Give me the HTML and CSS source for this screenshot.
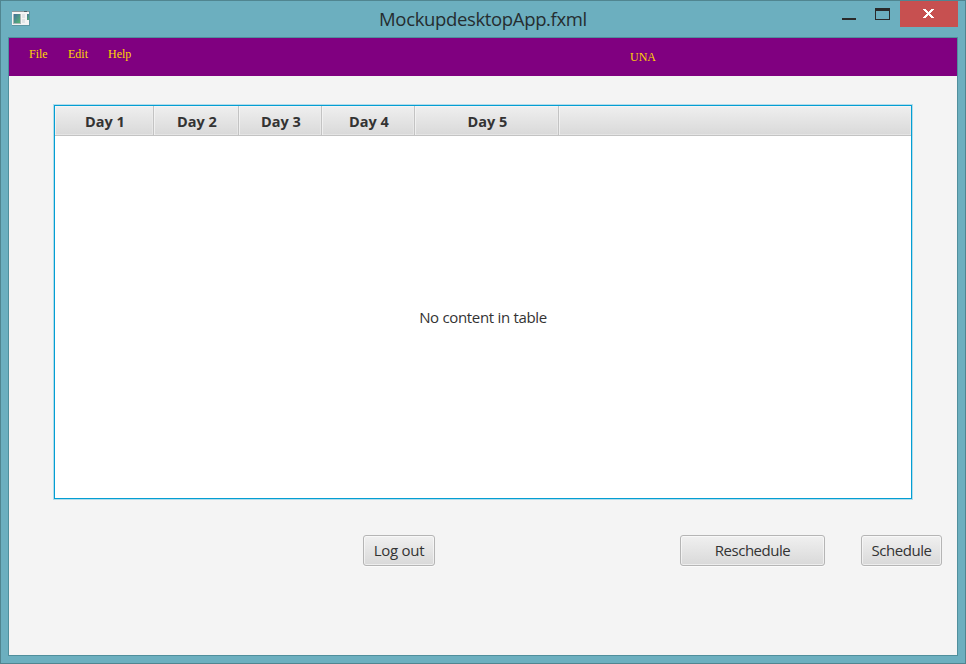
FILE: index.html
```html
<!DOCTYPE html>
<html lang="en">
<head>
<meta charset="utf-8">
<title>MockupdesktopApp.fxml</title>
<link rel="stylesheet" href="styles.css">
</head>
<body>
<div class="window">
  <header class="titlebar">
    <svg class="app-icon" width="20" height="17" viewBox="0 0 20 17" shape-rendering="crispEdges">
      <defs><linearGradient id="g" x1="0" y1="0" x2="1" y2="1"><stop offset="0" stop-color="#44709c"/><stop offset="1" stop-color="#56b574"/></linearGradient></defs>
      <path d="M1 1h18v15H1z" fill="#5c96a3"/>
      <path d="M1 1h17v14H1z" fill="#f4f4f4"/>
      <path d="M1 1h17v1H1z" fill="#8c989c"/>
      <path d="M13 1h3v1h-3z" fill="#4d6067"/>
      <path d="M2 4h8v10H2z" fill="#a9b7b5"/>
      <path d="M3 4h6v9H3z" fill="url(#g)"/>
      <path d="M11 4h3v4h-3zM11 9h3v4h-3z" fill="#e0e4e6"/>
      <path d="M16 4h2v6h-2z" fill="url(#g)"/>
    </svg>
    <h1 class="title"><span>MockupdesktopApp.fxml</span></h1>
    <div class="controls">
      <svg width="58" height="26" viewBox="0 0 58 26" shape-rendering="crispEdges">
        <path d="M0 17h14v2H0z" fill="#2a2a2a"/>
        <path d="M33 7h15v12H33zM34 10v8h13v-8z" fill="#2a2a2a" fill-rule="evenodd"/>
      </svg>
      <div class="close">
        <svg width="11" height="9" viewBox="0 0 11 9" shape-rendering="crispEdges"><path d="M0 0h3v1h1v1h1v1h1V2h1V1h1V0h3v1h-1v1H9v1H8v1H7v1h1v1h1v1h1v1h1v1H8V8H7V7H6V6H5v1H4v1H3v1H0V8h1V7h1V6h1V5h1V4H3V3H2V2H1V1H0z" fill="#fff"/></svg>
      </div>
    </div>
  </header>
  <main class="client">
    <nav class="menubar">
      <span class="file">File</span><span class="edit">Edit</span><span class="help">Help</span>
      <span class="user">UNA</span>
    </nav>
    <section class="table">
      <div class="head">
        <div><span>Day 1</span></div><div><span>Day 2</span></div><div><span>Day 3</span></div><div><span>Day 4</span></div><div><span>Day 5</span></div><div class="filler"></div>
      </div>
      <div class="empty"><span>No content in table</span></div>
    </section>
    <footer class="actions">
      <button class="logout">Log out</button>
      <button class="reschedule">Reschedule</button>
      <button class="schedule">Schedule</button>
    </footer>
  </main>
</div>
</body>
</html>
```
FILE: styles.css
```css
* { box-sizing: border-box; }
body { margin: 0; font-family: "Open Sans", "Noto Sans", sans-serif; color: #333; }
.window {
  width: 966px; height: 664px; padding: 0 7px 7px;
  background: #6cafbf; border: 1px solid #508590;
  display: flex; flex-direction: column;
}
.titlebar { height: 36px; flex: none; display: grid; grid-template-columns: 116px 1fr 116px; align-items: start; }
.app-icon { margin: 9px 0 0 3px; }
.title { margin: 0; font-size: 18.5px; font-weight: 400; line-height: 36px; letter-spacing: -0.35px; text-align: center; color: #252d30; white-space: nowrap; }
.controls { display: flex; }
.controls > svg { flex: none; }
.close { width: 58px; height: 26px; background: #c75050; padding: 8px 0 0 23px; line-height: 0; }
.client { flex: 1; border: 1px solid #508f9c; background: #f4f4f4; }
.menubar {
  height: 38px; background: #800080; color: #ffd700;
  font: 12px/14px "Liberation Serif", serif; display: flex; padding: 9px 0 0 20px;
}
.file { width: 39px; }
.edit { width: 40px; }
.help { width: 522px; }
.user { padding-top: 3px; }
.table {
  width: 858px; height: 394px; margin: 29px 0 0 45px; background: #fff;
  border: 1px solid #039ed3; box-shadow: 0 0 0 1px #b2dcea;
  display: flex; flex-direction: column; font-size: 15px;
}
.head {
  height: 30px; flex: none; display: grid; grid-template-columns: 99px 85px 83px 93px 144px 1fr;
  background: linear-gradient(#efefef, #d9d9d9); border-bottom: 1px solid #c3c3c3;
  font-weight: 700; font-size: 14.5px; line-height: 32px; text-align: center;
}
.head > div { height: 29px; padding-left: 2px; border-right: 1px solid #c3c3c3; box-shadow: inset 1px 1px #f7f7f7aa, inset -1px -1px #eeeeee88; }
.head > .filler { border-right: 0; }
.empty { flex: 1; display: flex; align-items: center; justify-content: center; letter-spacing: -0.32px; }
.actions { display: flex; margin-top: 36px; padding-left: 354px; }
button {
  height: 31px; padding: 0; border: 1px solid #b5b5b5; border-radius: 3px;
  background: linear-gradient(#f0f0f0, #d9d9d9);
  box-shadow: inset 0 0 0 1px #ffffff88, 0 1px #fbfbfb;
  color: #333; font: 15px/29px "Open Sans", "Noto Sans", sans-serif; letter-spacing: -0.48px;
}
.logout { width: 72px; margin-right: 245px; letter-spacing: -0.25px; }
.reschedule { width: 145px; margin-right: 36px; }
.schedule { width: 81px; }
```
